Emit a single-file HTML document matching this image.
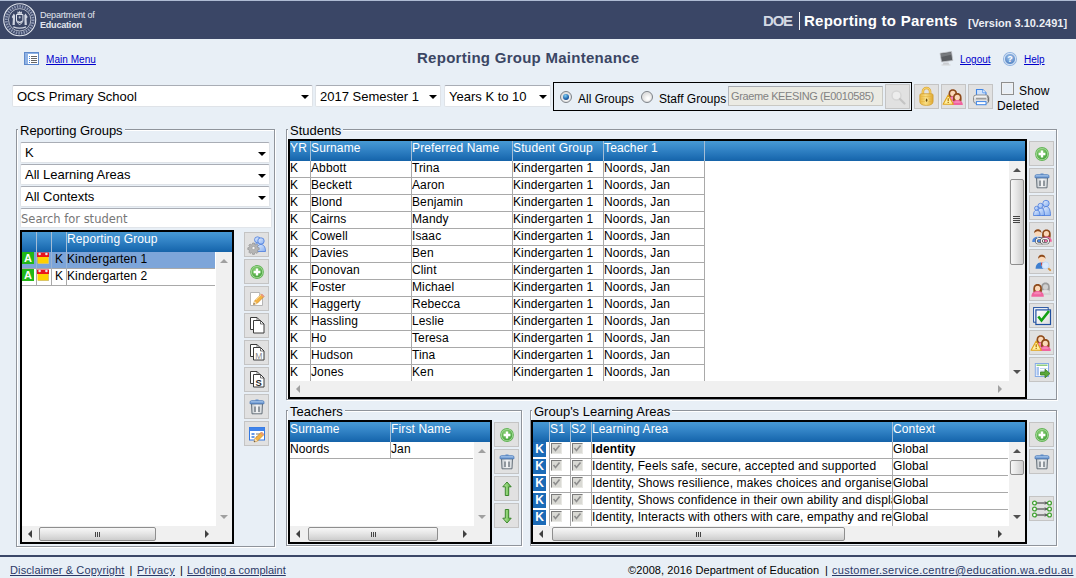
<!DOCTYPE html>
<html lang="en">
<head>
<meta charset="utf-8">
<title>Reporting Group Maintenance</title>
<style>
*{box-sizing:border-box;margin:0;padding:0}
html,body{width:1076px;height:578px;overflow:hidden}
body{background:#e8eff6;font-family:"Liberation Sans",Arial,sans-serif;font-size:13px;color:#000;position:relative}
.a{position:absolute}
a{color:#0000cc;text-decoration:underline}
#hdr{left:0;top:0;width:1076px;height:39px;background:#3a4666;border-top:1px solid #aebbd3;overflow:hidden}
.tb{font-weight:bold;white-space:nowrap}
.sel{background:#fff;border:1px solid #dfe3e8;border-top-color:#a9adb5;border-radius:2px;font-size:13px;white-space:nowrap;overflow:hidden;padding-left:4px}
.sel i{position:absolute;right:3px;top:50%;margin-top:-1px;border:4px solid transparent;border-top:4px solid #000;border-bottom:0;width:0;height:0}
.fs{border:1px solid #8f949b;box-shadow:inset 1px 1px 0 #fff,1px 1px 0 #fff}
.lg{background:#e8eff6;font-size:13px;line-height:15px;padding:0 2px 0 2px;white-space:nowrap}
.grid{border:2px solid #000;background:#fff;overflow:hidden}
.gh{left:0;top:0;right:0;height:20px;background:linear-gradient(#4799d4 0%,#3485c7 40%,#1c6cb2 85%,#1663a8 100%);color:#fff;font-size:12px;letter-spacing:.130px;white-space:nowrap}
.gh span{position:absolute;top:0;height:20px;border-left:1px solid #a4bdd6;padding-left:0;line-height:13px;padding-top:1px;overflow:hidden}
.gh span.f{border-left:0;padding-left:0}
.row{position:absolute;left:0;height:17px;font-size:12px;letter-spacing:.120px;white-space:nowrap}
.row span{position:absolute;top:0;height:17px;border-right:1px solid #a9a9a9;border-bottom:1px solid #a9a9a9;padding-left:0;overflow:hidden;line-height:14px;white-space:nowrap}
.btn{width:25px;height:25px;background:#e1e1e1;border:1px solid #c4c4c4}
.btn svg{position:absolute;left:4px;top:4px;width:16px;height:16px;overflow:visible}
.sb{background:#f0f0f0}
.thv{background:linear-gradient(90deg,#f7f7f7,#e6e6e6 45%,#cdcdcd);border:1px solid #8e8e8e;border-radius:2px}
.thh{background:linear-gradient(#f7f7f7,#e6e6e6 45%,#cdcdcd);border:1px solid #8e8e8e;border-radius:2px}
.au{border:4px solid transparent;border-bottom:4px solid #505050;border-top:0;width:0;height:0}
.ad{border:4px solid transparent;border-top:4px solid #505050;border-bottom:0;width:0;height:0}
.al{border:4px solid transparent;border-right:4px solid #404040;border-left:0;width:0;height:0}
.ar{border:4px solid transparent;border-left:4px solid #404040;border-right:0;width:0;height:0}
.gv i,.gv2 i{position:absolute;background:#444}
.ft{font-size:11px;line-height:13px;white-space:nowrap;color:#000}
a.ft{color:#2b3967}
.cb{width:11px;height:11px;background:#d9d9d4;border:1px solid #e8e8e4;border-top-color:#7a7a7a;border-left-color:#7a7a7a}
.kk{width:13px;height:15px;background:#1b6bb7;color:#fff;font-weight:bold;font-size:12px;line-height:15px;text-align:center;letter-spacing:0}
</style>
</head>
<body>
<div id="hdr" class="a">
<div class="a" style="left:600px;top:-1px;width:476px;height:40px;background:linear-gradient(90deg,rgba(255,255,255,0),rgba(255,255,255,.05) 40%%,rgba(255,255,255,.08))"></div>
<div class="a" style="left:620px;top:-70px;width:560px;height:180px;transform:rotate(-8deg);background:linear-gradient(180deg,rgba(255,255,255,0) 26%%,rgba(255,255,255,.09) 34%%,rgba(255,255,255,.02) 42%%,rgba(255,255,255,.10) 52%%,rgba(255,255,255,.01) 61%%,rgba(255,255,255,.07) 70%%,rgba(255,255,255,0) 80%%)"></div>
<svg class="a" style="left:2px;top:0px" width="36" height="37" viewBox="0 0 36 37">
<circle cx="17.700" cy="18.800" r="16" fill="none" stroke="#dfe3ec" stroke-width="1.100"/>
<circle cx="17.700" cy="18.800" r="13.400" fill="none" stroke="#8d97b3" stroke-width="2.800" stroke-dasharray="1.500 1.100"/>
<circle cx="17.700" cy="18.800" r="11.200" fill="none" stroke="#cfd4e0" stroke-width=".800"/>
<path d="M14.500 13.500h6.400v5.500c0 2.200-1.500 3.600-3.200 4.500c-1.700-.900-3.200-2.300-3.200-4.500z" fill="none" stroke="#dfe3ec" stroke-width="1"/>
<path d="M15.300 19.500c1.500 1.500 3.300 1.500 4.800 0v1.500c-1.500 1.300-3.300 1.300-4.800 0z" fill="#dfe3ec"/>
<path d="M15.200 12.800l.600-2.600l1 1.300l.900-1.700l.900 1.700l1-1.300l.600 2.600z" fill="#dfe3ec"/>
<path d="M11.800 12.500l1.300 1.800l-.300 9.700h-2.300l.400-6.500l-1.200-1.500zM23.600 12.500l-1.300 1.800l.300 9.700h2.300l-.400-6.500l1.200-1.500z" fill="#cfd4e0"/>
<path d="M11.300 25.800c4 1.600 8.800 1.600 12.800 0" stroke="#cfd4e0" stroke-width="1.300" fill="none"/>
<path d="M16.500 16.200h2.400M17.700 15v2.600" stroke="#cfd4e0" stroke-width=".700"/>
</svg>
<div class="a" id="dept" style="left:40px;top:9px;color:#e3e6ee;font-size:9px;line-height:10px;white-space:nowrap;letter-spacing:-.190px">Department of<br><b>Education</b></div>
<div class="a tb" id="doe" style="left:763px;top:11px;color:#d3d8e3;font-size:15px;line-height:18px;letter-spacing:-1.200px">DOE</div>
<div class="a" style="left:799px;top:11px;width:1px;height:18px;background:#f4f5f8"></div>
<div class="a tb" id="rtp" style="left:804px;top:11px;color:#fff;font-size:15px;line-height:18px;letter-spacing:.260px">Reporting to Parents</div>
<div class="a tb" id="ver" style="left:968px;top:15px;color:#eceef4;font-size:11px;line-height:14px">[Version 3.10.2491]</div>
</div>
<svg class="a" style="left:24px;top:52px" width="15" height="13" viewBox="0 0 15 13">
<rect x=".500" y=".500" width="14" height="12" fill="#8fb2e4" stroke="#5f8acb"/>
<rect x="4" y="2" width="10" height="10" fill="#fff"/>
<path d="M7 4.500h6M7 6.500h6M7 8.500h6M7 10.500h6" stroke="#555" stroke-width=".900"/>
<path d="M5 4.500h1M5 6.500h1M5 8.500h1M5 10.500h1" stroke="#3a7fdc" stroke-width=".900"/>
</svg>
<a class="a" id="mm" style="left:46px;top:53px;font-size:10px;line-height:13px;white-space:nowrap;letter-spacing:.050px">Main Menu</a>
<div class="a tb" id="title" style="left:417px;top:48.500px;font-size:15px;line-height:18px;color:#3b4664;letter-spacing:.270px">Reporting Group Maintenance</div>
<svg class="a" style="left:939px;top:51px" width="15" height="15" viewBox="0 0 15 15">
<path d="M4.500 11.500h5l.800 2.500h-6.600z" fill="#c9ccd0"/><path d="M2.500 14h9" stroke="#d5d8dc" stroke-width="1.200"/>
<path d="M1 2.200l11.500-1.700l1.300 9l-11.300 1.500z" fill="#5a5d61" stroke="#c4c7cb" stroke-width=".800"/><path d="M1.800 2.900l10.200-1.500l.300 2.300l-10.200 2.200z" fill="#8a8d91" opacity=".6"/>
</svg>
<div class="a" style="left:1004px;top:53px;width:12px;height:12px;border-radius:50%;background:radial-gradient(circle at 50% 35%,#a9c9ee,#5585c4 75%);border:1px solid #cfe0f5;box-shadow:0 0 0 1px #8fb2e0;color:#fff;font-weight:bold;font-size:9px;line-height:10px;text-align:center">?</div>
<a class="a" id="lo" style="left:960px;top:53px;font-size:10px;line-height:13px;white-space:nowrap">Logout</a>
<a class="a" id="hp" style="left:1024px;top:53px;font-size:10px;line-height:13px;white-space:nowrap">Help</a>

<div class="a sel" style="left:12px;top:85px;width:301px;height:22px;line-height:22px">OCS Primary School<i></i></div>
<div class="a sel" style="left:315px;top:85px;width:126px;height:22px;line-height:22px">2017 Semester 1<i></i></div>
<div class="a sel" style="left:444px;top:85px;width:107px;height:22px;line-height:22px">Years K to 10<i></i></div>
<div class="a" style="left:553px;top:82px;width:359px;height:29px;border:1px solid #000"></div>
<div class="a" style="left:560px;top:91px;width:12px;height:12px;border-radius:50%;border:1px solid #7d8288;background:radial-gradient(circle at 60% 65%,#ffffff 10%,#c9c9c9 100%);box-shadow:inset 0 0 0 1px #e4e4e4"><div class="a" style="left:2px;top:2px;width:6px;height:6px;border-radius:50%;background:radial-gradient(circle at 40% 30%,#7fd0f5,#1d5fa8 60%,#123c78)"></div></div>
<div class="a" id="ag" style="left:578px;top:92px;font-size:12px;line-height:15px;white-space:nowrap">All Groups</div>
<div class="a" style="left:641px;top:91px;width:12px;height:12px;border-radius:50%;border:1px solid #7d8288;background:radial-gradient(circle at 60% 65%,#ffffff 10%,#c9c9c9 100%);box-shadow:inset 0 0 0 1px #e4e4e4"></div>
<div class="a" id="sg" style="left:659px;top:92px;font-size:12px;line-height:15px;white-space:nowrap">Staff Groups</div>
<div class="a" id="gk" style="left:728px;top:86px;width:155px;height:20px;background:#ebebe4;border:1px solid #c9c9c4;border-top-color:#a5a9b0;border-left-color:#b5b8be;font-size:11px;letter-spacing:-.380px;line-height:19px;color:#828282;padding-left:2px;white-space:nowrap;overflow:hidden"><span id="gkt">Graeme KEESING (E0010585)</span></div>
<div class="a btn" style="left:885px;top:84px"><svg viewBox="0 0 16 16"><circle cx="6.500" cy="6.500" r="4.500" fill="#ededed" stroke="#d6d6d6" stroke-width="1.500"/><path d="M10 10l4.500 4.500" stroke="#c4c4c4" stroke-width="2.200" stroke-linecap="round"/></svg></div>
<div class="a btn" style="left:914px;top:84px"><svg viewBox="0 0 16 16"><defs><linearGradient id="glk" x1="0" x2="1"><stop offset="0" stop-color="#e9b740"/><stop offset=".45" stop-color="#f8de84"/><stop offset="1" stop-color="#dfa82f"/></linearGradient></defs><path d="M3.900 6.500V2.600a3.600 3.600 0 0 1 7.200 0V6.500" fill="none" stroke="#dfa935" stroke-width="2.500"/><path d="M3.900 6.500V2.600a3.600 3.600 0 0 1 7.200 0V6.500" fill="none" stroke="#f6d774" stroke-width="1.100"/><path d="M.800 6.200q0-1.500 1.500-1.500h10.300q1.500 0 1.500 1.500v6.200q0 4-6.650 4t-6.650-4z" fill="url(#glk)" stroke="#cf9a2c" stroke-width=".700"/><path d="M1.500 7.500h12M1.500 10h12M1.500 12.500h12" stroke="#e2ae3c" stroke-width=".500"/><ellipse cx="7.600" cy="11" rx="2" ry="2.600" fill="#f9e089"/><ellipse cx="7.600" cy="11.200" rx=".800" ry="1.600" fill="#6b4c10"/></svg></div>
<div class="a btn" style="left:941px;top:84px"><svg viewBox="0 0 16 16"><path d="M2.7 8.5c-.900-6.500 1-8.300 4.100-8.300s5 1.800 4.100 8.300z" fill="#8e4a1a"/><ellipse cx="6.8" cy="4.5" rx="2.600" ry="2.700" fill="#fbd8b8"/><path d="M2.3 12.2C2.3 8.7 4.324999999999999 7.199999999999999 6.8 7.199999999999999C9.275 7.199999999999999 11.3 8.7 11.3 12.2z" fill="#f0639f"/><path d="M4.1 10.149999999999999C4.1 8.575 5.3149999999999995 7.8999999999999995 6.8 7.8999999999999995C8.285 7.8999999999999995 9.5 8.575 9.5 10.149999999999999z" fill="#f9a3c8" opacity=".55"/><path d="M7.200000000000001 12.4c-.900-6.500 1-8.300 4.100-8.300s5 1.800 4.100 8.300z" fill="#8e4a1a"/><ellipse cx="11.3" cy="8.4" rx="2.600" ry="2.700" fill="#fbd8b8"/><path d="M5.800000000000001 16.1C5.800000000000001 12.6 8.275 11.1 11.3 11.1C14.325000000000001 11.1 16.8 12.6 16.8 16.1z" fill="#f0639f"/><path d="M8.0 14.05C8.0 12.475000000000001 9.485000000000001 11.8 11.3 11.8C13.115 11.8 14.600000000000001 12.475000000000001 14.600000000000001 14.05z" fill="#f9a3c8" opacity=".55"/><path d="M2.200 6l5.100 9.200h-10.200z" fill="#fff0a0" stroke="#e0a21a" stroke-width="1.100" stroke-linejoin="round"/><path d="M2.200 9.300v2.900M2.200 13v1" stroke="#b06d00" stroke-width="1.200"/></svg></div>
<div class="a btn" style="left:968px;top:84px"><svg viewBox="0 0 16 16"><defs><linearGradient id="gpr" y1="0" y2="1" x2="0"><stop offset="0" stop-color="#fdfdfd"/><stop offset=".55" stop-color="#d9d9d9"/><stop offset="1" stop-color="#f4f4f4"/></linearGradient></defs><path d="M3.500 7V.500h6.200l3.300 3.300V7z" fill="#cfe2fb" stroke="#3f85e6" stroke-width="1.100"/><path d="M9.700 .500v3.300h3.300" fill="#eef5fe" stroke="#3f85e6" stroke-width=".700"/><rect x=".500" y="6" width="15.300" height="8.300" rx="2.600" fill="url(#gpr)" stroke="#858585" stroke-width=".900"/><path d="M3 9.600h10.300" stroke="#9c9c9c" stroke-width="1.600"/><path d="M13.800 7.500q1.400 0 1.400 1.500v3.500" fill="none" stroke="#555" stroke-width=".900"/><rect x="3.400" y="12.600" width="9.600" height="3.100" fill="#fff" stroke="#3f85e6" stroke-width="1"/></svg></div>
<div class="a" style="left:1001px;top:82px;width:13px;height:13px;background:linear-gradient(135deg,#d3d7dc,#f8f8f8 70%%);border:1px solid #8e8f8f;box-shadow:inset 0 0 0 1px #f1f1f1"></div>
<div class="a" id="sh" style="left:1019px;top:84px;font-size:12px;line-height:15px;letter-spacing:.150px">Show</div>
<div class="a" id="dl" style="left:997px;top:99px;font-size:12px;line-height:15px;letter-spacing:.150px">Deleted</div>
<div class="a fs" style="left:16px;top:129px;width:259px;height:418px"></div>
<div class="a lg" style="left:18px;top:123px">Reporting Groups</div>
<div class="a sel" style="left:20px;top:142px;width:250px;height:21px;line-height:19px">K<i></i></div>
<div class="a sel" style="left:20px;top:164px;width:250px;height:21px;line-height:19px">All Learning Areas<i></i></div>
<div class="a sel" style="left:20px;top:186px;width:250px;height:21px;line-height:19px">All Contexts<i></i></div>
<div class="a" id="sfs" style="left:20px;top:208px;width:252px;height:20px;background:#fff;border:1px solid #e1e5ea;border-top-color:#a9adb5;border-radius:2px;font-family:'DejaVu Sans','Liberation Sans',sans-serif;font-size:11.500px;line-height:20px;color:#777;white-space:nowrap;overflow:hidden"><span id="sfst">Search for student</span></div>
<div class="a grid" style="left:20px;top:230px;width:214px;height:314px">
<div class="a gh"><span class="f" style="left:0;width:14px"></span><span style="left:14px;width:15px"></span><span style="left:29px;width:15px"></span><span style="left:44px;right:0">Reporting Group</span></div>
<div class="row" style="top:20px;width:193px;background:#7da5d9;">
<span style="left:0;width:15px;padding:0;border-right-color:#9ab4d4;"><b class="a" style="left:0;top:0;width:12px;height:12px;letter-spacing:0;background:#22b716;color:#fff;font-size:11px;line-height:12px;text-align:center">A</b></span>
<span style="left:15px;width:15px;padding:0;border-right-color:#9ab4d4;"><svg class="a" style="left:0;top:0" width="13" height="13" viewBox="0 0 13 13"><rect x="1" y="4.500" width="11" height="7.500" fill="#b9bcc6"/><rect x=".500" y="4.500" width="11" height="7" fill="#ffd000"/><rect x="0" y=".500" width="12" height="4.500" fill="#e9131c"/><circle cx="2.600" cy="2" r="1.300" fill="#e4e4ea"/><circle cx="9.400" cy="2" r="1.300" fill="#e4e4ea"/></svg></span>
<span style="left:30px;width:15px;text-align:right;padding-right:3px;border-right-color:#9ab4d4;">K</span>
<span style="left:45px;width:148px;border-right:0">Kindergarten 1</span>
</div>
<div class="row" style="top:37px;width:193px;">
<span style="left:0;width:15px;padding:0;"><b class="a" style="left:0;top:0;width:12px;height:12px;letter-spacing:0;background:#22b716;color:#fff;font-size:11px;line-height:12px;text-align:center">A</b></span>
<span style="left:15px;width:15px;padding:0;"><svg class="a" style="left:0;top:0" width="13" height="13" viewBox="0 0 13 13"><rect x="1" y="4.500" width="11" height="7.500" fill="#b9bcc6"/><rect x=".500" y="4.500" width="11" height="7" fill="#ffd000"/><rect x="0" y=".500" width="12" height="4.500" fill="#e9131c"/><circle cx="2.600" cy="2" r="1.300" fill="#e4e4ea"/><circle cx="9.400" cy="2" r="1.300" fill="#e4e4ea"/></svg></span>
<span style="left:30px;width:15px;text-align:right;padding-right:3px;">K</span>
<span style="left:45px;width:148px;border-right:0">Kindergarten 2</span>
</div>
</div>
<div class="a sb" style="left:216px;top:252px;width:16px;height:274px">
<div class="a au" style="left:4px;top:7px;opacity:.5"></div><div class="a ad" style="left:4px;bottom:7px;opacity:.5"></div>
</div>
<div class="a sb" style="left:22px;top:526px;width:194px;height:16px">
<div class="a al" style="left:6px;top:4px"></div><div class="a ar" style="right:7px;top:4px"></div>
<div class="a thh" style="left:17px;top:1px;width:117px;height:14px">
<div class="gv2"><i style="top:4px;left:55px;width:1px;height:5px"></i><i style="top:4px;left:57px;width:1px;height:5px"></i><i style="top:4px;left:59px;width:1px;height:5px"></i></div>
</div>
</div>
<div class="a sb" style="left:216px;top:526px;width:16px;height:16px"></div>
<div class="a btn" style="left:244px;top:232px"><svg viewBox="0 0 16 16"><defs><linearGradient id="gbp" x1="0" y1="0" x2="1" y2="1"><stop offset="0" stop-color="#e6effd"/><stop offset="1" stop-color="#86aef0"/></linearGradient></defs><path d="M4.5 12.5C4.5 7.95 6.4125 6 8.75 6C11.0875 6 13.0 7.95 13.0 12.5z" fill="url(#gbp)" stroke="#4a7bdc" stroke-width=".800"/><circle cx="8.5" cy="2.8" r="3" fill="url(#gbp)" stroke="#4a7bdc" stroke-width=".800"/><path d="M7.5 14.5C7.5 9.6 9.525 7.5 12.0 7.5C14.475 7.5 16.5 9.6 16.5 14.5z" fill="url(#gbp)" stroke="#4a7bdc" stroke-width=".800"/><circle cx="12" cy="4" r="3.2" fill="url(#gbp)" stroke="#4a7bdc" stroke-width=".800"/><g transform="translate(4.500 11)"><path d="M-.900-5h1.800l.300 1.400l1 .400l1.200-.800l1.300 1.300l-.800 1.200l.400 1l1.400.300v1.800l-1.400.300l-.400 1l.800 1.200l-1.300 1.300l-1.200-.800l-1 .400l-.300 1.400h-1.800l-.300-1.400l-1-.400l-1.200.800l-1.300-1.300l.800-1.200l-.400-1l-1.400-.300v-1.800l1.400-.300l.400-1l-.800-1.200l1.300-1.300l1.200.800l1-.400z" fill="#b5b5b5" stroke="#8c8c8c" stroke-width=".600"/><circle cx="0" cy="0" r="1.600" fill="#f4f4f4" stroke="#8c8c8c" stroke-width=".500"/></g></svg></div>
<div class="a btn" style="left:244px;top:259px"><svg viewBox="0 0 16 16"><defs><radialGradient id="gadd" cx=".4" cy=".3" r=".8"><stop offset="0" stop-color="#8fd27a"/><stop offset="1" stop-color="#3f9f36"/></radialGradient></defs><circle cx="8" cy="8" r="6.900" fill="#62b455"/><circle cx="8" cy="8" r="6.100" fill="#a9dc9c"/><circle cx="8" cy="8" r="5.300" fill="url(#gadd)"/><path d="M8 4.600v6.800M4.600 8h6.800" stroke="#fff" stroke-width="2.300"/></svg></div>
<div class="a btn" style="left:244px;top:286px"><svg viewBox="0 0 16 16"><path d="M1.500 1.500h9l3 3v10h-12z" fill="#fff" stroke="#b5b5b5" stroke-width="1"/><path d="M10.500 1.500v3h3" fill="#eee" stroke="#b5b5b5" stroke-width=".800"/><path d="M4.500 13.500l1-3.500l7-7l2.500 2.500l-7 7z" fill="#f3b244" stroke="#c98820" stroke-width=".700"/><path d="M4.500 13.500l1-3.500l2.500 2.500z" fill="#f8e2bd"/><path d="M4.500 13.500l.450-1.500l1.050 1.050z" fill="#333"/><path d="M12.300 3.200l2.500 2.500" stroke="#e8928a" stroke-width="1.500"/><path d="M7 9l5-5" stroke="#fbd98a" stroke-width=".900"/></svg></div>
<div class="a btn" style="left:244px;top:313px"><svg viewBox="0 0 16 16"><path d="M1.500 -.500h6.500l3 3v9h-9.500z" fill="#fff" stroke="#3a3a3a" stroke-width="1"/><path d="M8 -.500v3h3" fill="none" stroke="#3a3a3a" stroke-width=".700"/><path d="M4.500 2.500h7l3.500 3.500v9h-10.500z" fill="#fff" stroke="#3a3a3a" stroke-width="1"/><path d="M11.500 2.500v3.500h3.500" fill="none" stroke="#3a3a3a" stroke-width=".700"/></svg></div>
<div class="a btn" style="left:244px;top:340px"><svg viewBox="0 0 16 16"><path d="M1.500 -.500h6.500l3 3v9h-9.500z" fill="#fff" stroke="#3a3a3a" stroke-width="1"/><path d="M8 -.500v3h3" fill="none" stroke="#3a3a3a" stroke-width=".700"/><path d="M4.500 2.500h7l3.500 3.500v9h-10.500z" fill="#fff" stroke="#3a3a3a" stroke-width="1"/><path d="M11.500 2.500v3.500h3.500" fill="none" stroke="#3a3a3a" stroke-width=".700"/><text x="9.700" y="14" font-family="Liberation Sans,sans-serif" font-size="8.500" text-anchor="middle" fill="#8a8a8a">M</text></svg></div>
<div class="a btn" style="left:244px;top:367px"><svg viewBox="0 0 16 16"><path d="M1.500 -.500h6.500l3 3v9h-9.500z" fill="#fff" stroke="#3a3a3a" stroke-width="1"/><path d="M8 -.500v3h3" fill="none" stroke="#3a3a3a" stroke-width=".700"/><path d="M4.500 2.500h7l3.500 3.500v9h-10.500z" fill="#fff" stroke="#3a3a3a" stroke-width="1"/><path d="M11.500 2.500v3.500h3.500" fill="none" stroke="#3a3a3a" stroke-width=".700"/><text x="9.700" y="14.300" font-family="Liberation Sans,sans-serif" font-size="9.500" font-weight="bold" text-anchor="middle" fill="#2a2a2a">S</text></svg></div>
<div class="a btn" style="left:244px;top:394px"><svg viewBox="0 0 16 16"><defs><linearGradient id="gtb" x1="0" x2="1"><stop offset="0" stop-color="#c3c9ce"/><stop offset=".5" stop-color="#f4f5f6"/><stop offset="1" stop-color="#cfd4d8"/></linearGradient><linearGradient id="gtl" y1="0" y2="1" x2="0"><stop offset="0" stop-color="#b5d0f0"/><stop offset="1" stop-color="#5b8ccc"/></linearGradient></defs><path d="M2.500 4.800h11l-.500 10h-10z" fill="url(#gtb)" stroke="#5c6872" stroke-width=".900"/><path d="M6 7.500v5.500M10 7.500v5.500" stroke="#6d767e" stroke-width="1.400"/><rect x="6.500" y=".500" width="3" height="1.500" fill="#5b8ccc"/><path d="M1 4.800v-1.600q0-1.600 1.600-1.600h10.800q1.600 0 1.600 1.600v1.600z" fill="url(#gtl)" stroke="#4675b5" stroke-width=".700"/></svg></div>
<div class="a btn" style="left:244px;top:421px"><svg viewBox="0 0 16 16"><rect x=".500" y="1.500" width="15" height="12.500" fill="#fff" stroke="#3478e0" stroke-width="1"/><rect x=".500" y="1.500" width="15" height="3.500" fill="#3f83ea"/><path d="M2.500 8h3M2.500 11h3" stroke="#3478e0" stroke-width="1.400"/><path d="M7 8h6M7 11h3" stroke="#a5a5a5" stroke-width="1.300"/><path d="M5 16l1-3.500l6.500-6.500l2.500 2.500l-6.500 6.500z" fill="#f3b244" stroke="#c98820" stroke-width=".700"/><path d="M5 16l1-3.500l2.500 2.500z" fill="#f8e2bd"/><path d="M5 16l.450-1.500l1.050 1.050z" fill="#333"/><path d="M12 6.500l2.500 2.500" stroke="#e8928a" stroke-width="1.400"/></svg></div>
<div class="a fs" style="left:286px;top:129px;width:771px;height:271px"></div>
<div class="a lg" style="left:288px;top:123px">Students</div>
<div class="a grid" style="left:288px;top:139px;width:739px;height:260px">
<div class="a gh">
<span class="f" style="left:0px;width:20px">YR</span>
<span style="left:20px;width:101px">Surname</span>
<span style="left:121px;width:101px">Preferred Name</span>
<span style="left:222px;width:91px">Student Group</span>
<span style="left:313px;width:101px">Teacher 1</span>
<span style="left:414px;right:0"></span></div>
<div class="row" style="top:20px;width:415px">
<span style="left:0px;width:21px">K</span>
<span style="left:21px;width:101px">Abbott</span>
<span style="left:122px;width:101px">Trina</span>
<span style="left:223px;width:91px">Kindergarten 1</span>
<span style="left:314px;width:101px">Noords, Jan</span>
</div>
<div class="row" style="top:37px;width:415px">
<span style="left:0px;width:21px">K</span>
<span style="left:21px;width:101px">Beckett</span>
<span style="left:122px;width:101px">Aaron</span>
<span style="left:223px;width:91px">Kindergarten 1</span>
<span style="left:314px;width:101px">Noords, Jan</span>
</div>
<div class="row" style="top:54px;width:415px">
<span style="left:0px;width:21px">K</span>
<span style="left:21px;width:101px">Blond</span>
<span style="left:122px;width:101px">Benjamin</span>
<span style="left:223px;width:91px">Kindergarten 1</span>
<span style="left:314px;width:101px">Noords, Jan</span>
</div>
<div class="row" style="top:71px;width:415px">
<span style="left:0px;width:21px">K</span>
<span style="left:21px;width:101px">Cairns</span>
<span style="left:122px;width:101px">Mandy</span>
<span style="left:223px;width:91px">Kindergarten 1</span>
<span style="left:314px;width:101px">Noords, Jan</span>
</div>
<div class="row" style="top:88px;width:415px">
<span style="left:0px;width:21px">K</span>
<span style="left:21px;width:101px">Cowell</span>
<span style="left:122px;width:101px">Isaac</span>
<span style="left:223px;width:91px">Kindergarten 1</span>
<span style="left:314px;width:101px">Noords, Jan</span>
</div>
<div class="row" style="top:105px;width:415px">
<span style="left:0px;width:21px">K</span>
<span style="left:21px;width:101px">Davies</span>
<span style="left:122px;width:101px">Ben</span>
<span style="left:223px;width:91px">Kindergarten 1</span>
<span style="left:314px;width:101px">Noords, Jan</span>
</div>
<div class="row" style="top:122px;width:415px">
<span style="left:0px;width:21px">K</span>
<span style="left:21px;width:101px">Donovan</span>
<span style="left:122px;width:101px">Clint</span>
<span style="left:223px;width:91px">Kindergarten 1</span>
<span style="left:314px;width:101px">Noords, Jan</span>
</div>
<div class="row" style="top:139px;width:415px">
<span style="left:0px;width:21px">K</span>
<span style="left:21px;width:101px">Foster</span>
<span style="left:122px;width:101px">Michael</span>
<span style="left:223px;width:91px">Kindergarten 1</span>
<span style="left:314px;width:101px">Noords, Jan</span>
</div>
<div class="row" style="top:156px;width:415px">
<span style="left:0px;width:21px">K</span>
<span style="left:21px;width:101px">Haggerty</span>
<span style="left:122px;width:101px">Rebecca</span>
<span style="left:223px;width:91px">Kindergarten 1</span>
<span style="left:314px;width:101px">Noords, Jan</span>
</div>
<div class="row" style="top:173px;width:415px">
<span style="left:0px;width:21px">K</span>
<span style="left:21px;width:101px">Hassling</span>
<span style="left:122px;width:101px">Leslie</span>
<span style="left:223px;width:91px">Kindergarten 1</span>
<span style="left:314px;width:101px">Noords, Jan</span>
</div>
<div class="row" style="top:190px;width:415px">
<span style="left:0px;width:21px">K</span>
<span style="left:21px;width:101px">Ho</span>
<span style="left:122px;width:101px">Teresa</span>
<span style="left:223px;width:91px">Kindergarten 1</span>
<span style="left:314px;width:101px">Noords, Jan</span>
</div>
<div class="row" style="top:207px;width:415px">
<span style="left:0px;width:21px">K</span>
<span style="left:21px;width:101px">Hudson</span>
<span style="left:122px;width:101px">Tina</span>
<span style="left:223px;width:91px">Kindergarten 1</span>
<span style="left:314px;width:101px">Noords, Jan</span>
</div>
<div class="row" style="top:224px;width:415px">
<span style="left:0px;width:21px">K</span>
<span style="left:21px;width:101px">Jones</span>
<span style="left:122px;width:101px">Ken</span>
<span style="left:223px;width:91px">Kindergarten 1</span>
<span style="left:314px;width:101px">Noords, Jan</span>
</div>
</div>
<div class="a sb" style="left:1009px;top:161px;width:16px;height:220px">
<div class="a au" style="left:4px;top:7px"></div><div class="a ad" style="left:4px;bottom:7px"></div>
<div class="a thv" style="left:1px;top:18px;width:14px;height:86px">
<div class="gv"><i style="left:2px;top:36px;width:7px;height:1px"></i><i style="left:2px;top:38px;width:7px;height:1px"></i><i style="left:2px;top:40px;width:7px;height:1px"></i><i style="left:2px;top:42px;width:7px;height:1px"></i></div>
</div>
</div>
<div class="a sb" style="left:290px;top:381px;width:719px;height:16px">
<div class="a al" style="left:6px;top:4px;opacity:.45"></div><div class="a ar" style="right:7px;top:4px;opacity:.45"></div>
</div>
<div class="a sb" style="left:1009px;top:381px;width:16px;height:16px"></div>
<div class="a btn" style="left:1029px;top:141px"><svg viewBox="0 0 16 16"><defs><radialGradient id="gadd" cx=".4" cy=".3" r=".8"><stop offset="0" stop-color="#8fd27a"/><stop offset="1" stop-color="#3f9f36"/></radialGradient></defs><circle cx="8" cy="8" r="6.900" fill="#62b455"/><circle cx="8" cy="8" r="6.100" fill="#a9dc9c"/><circle cx="8" cy="8" r="5.300" fill="url(#gadd)"/><path d="M8 4.600v6.800M4.600 8h6.800" stroke="#fff" stroke-width="2.300"/></svg></div>
<div class="a btn" style="left:1029px;top:168px"><svg viewBox="0 0 16 16"><defs><linearGradient id="gtb" x1="0" x2="1"><stop offset="0" stop-color="#c3c9ce"/><stop offset=".5" stop-color="#f4f5f6"/><stop offset="1" stop-color="#cfd4d8"/></linearGradient><linearGradient id="gtl" y1="0" y2="1" x2="0"><stop offset="0" stop-color="#b5d0f0"/><stop offset="1" stop-color="#5b8ccc"/></linearGradient></defs><path d="M2.500 4.800h11l-.500 10h-10z" fill="url(#gtb)" stroke="#5c6872" stroke-width=".900"/><path d="M6 7.500v5.500M10 7.500v5.500" stroke="#6d767e" stroke-width="1.400"/><rect x="6.500" y=".500" width="3" height="1.500" fill="#5b8ccc"/><path d="M1 4.800v-1.600q0-1.600 1.600-1.600h10.800q1.600 0 1.600 1.600v1.600z" fill="url(#gtl)" stroke="#4675b5" stroke-width=".700"/></svg></div>
<div class="a btn" style="left:1029px;top:195px"><svg viewBox="0 0 16 16"><defs><linearGradient id="gbp" x1="0" y1="0" x2="1" y2="1"><stop offset="0" stop-color="#e6effd"/><stop offset="1" stop-color="#86aef0"/></linearGradient></defs><path d="M8.0 15.5C8.0 9.2 9.9125 6.5 12.25 6.5C14.5875 6.5 16.5 9.2 16.5 15.5z" fill="url(#gbp)" stroke="#4a7bdc" stroke-width=".800"/><circle cx="12" cy="3.5" r="3.2" fill="url(#gbp)" stroke="#4a7bdc" stroke-width=".800"/><path d="M3.5 15.5C3.5 10.25 5.074999999999999 8 7.0 8C8.925 8 10.5 10.25 10.5 15.5z" fill="url(#gbp)" stroke="#4a7bdc" stroke-width=".800"/><circle cx="6.5" cy="5.8" r="2.5" fill="url(#gbp)" stroke="#4a7bdc" stroke-width=".800"/><path d="M-0.5 15.5C-0.5 11.65 0.9624999999999999 10 2.75 10C4.5375 10 6.0 11.65 6.0 15.5z" fill="url(#gbp)" stroke="#4a7bdc" stroke-width=".800"/><circle cx="2.5" cy="8.3" r="2" fill="url(#gbp)" stroke="#4a7bdc" stroke-width=".800"/></svg></div>
<div class="a btn" style="left:1029px;top:222px"><svg viewBox="0 0 16 16"><circle cx="3.8" cy="6.1" r="3.300" fill="#fbd8b8"/><path d="M0.19999999999999973 6.2c-.800-5.400 8-5.400 7.200 0c-1.200-2.200-4.700-2.800-7.200 0z" fill="#8e4a1a"/><path d="M-1.7999999999999998 14.899999999999999C-1.7999999999999998 11.26 0.7199999999999998 9.7 3.8 9.7C6.88 9.7 9.399999999999999 11.26 9.399999999999999 14.899999999999999z" fill="#4f86d9"/><path d="M2.5 9.7l1.300 1.600l1.300-1.600z" fill="#fff"/><path d="M8.3 10.8c-.900-6.500 1-8.300 4.100-8.300s5 1.800 4.100 8.300z" fill="#8e4a1a"/><ellipse cx="12.4" cy="6.8" rx="2.600" ry="2.700" fill="#fbd8b8"/><path d="M7.0 14.7C7.0 11.06 9.43 9.5 12.4 9.5C15.370000000000001 9.5 17.8 11.06 17.8 14.7z" fill="#f0639f"/><path d="M9.16 12.54C9.16 10.902 10.618 10.2 12.4 10.2C14.182 10.2 15.64 10.902 15.64 12.54z" fill="#f9a3c8" opacity=".55"/><rect x="2.300" y="11.600" width="7.200" height="4.600" rx="2.300" fill="none" stroke="#4a4a4a" stroke-width="2.300"/><rect x="2.300" y="11.600" width="7.200" height="4.600" rx="2.300" fill="none" stroke="#f6f6f6" stroke-width="1.100"/><rect x="7.300" y="11.600" width="7.200" height="4.600" rx="2.300" fill="none" stroke="#4a4a4a" stroke-width="2.300"/><rect x="7.300" y="11.600" width="7.200" height="4.600" rx="2.300" fill="none" stroke="#f6f6f6" stroke-width="1.100"/></svg></div>
<div class="a btn" style="left:1029px;top:249px"><svg viewBox="0 0 16 16"><circle cx="7.8" cy="4.6" r="3.300" fill="#fbd8b8"/><path d="M4.199999999999999 4.7c-.800-5.400 8-5.400 7.200 0c-1.200-2.200-4.700-2.800-7.200 0z" fill="#8e4a1a"/><path d="M1.5999999999999996 14.799999999999999C1.5999999999999996 10.18 4.389999999999999 8.2 7.8 8.2C11.21 8.2 14.0 10.18 14.0 14.799999999999999z" fill="#3f7fcf"/><path d="M6.5 8.2l1.300 1.600l1.300-1.600z" fill="#fff"/><path d="M7.800 8.400v3.600" stroke="#d0312b" stroke-width="1.300"/><path d="M13.800 13.800l2.400 2.400" stroke="#d2903f" stroke-width="1.900" stroke-linecap="round"/><circle cx="11.500" cy="11.400" r="3.500" fill="#dbe9fb" stroke="#c3d8f4" stroke-width=".900"/></svg></div>
<div class="a btn" style="left:1029px;top:276px"><svg viewBox="0 0 16 16"><path d="M7.4 9.9c-.900-6.500 1-8.300 4.100-8.300s5 1.800 4.100 8.300z" fill="#9c9c9c"/><ellipse cx="11.5" cy="5.9" rx="2.600" ry="2.700" fill="#cfcfcf"/><path d="M5.9 14.1C5.9 10.25 8.42 8.6 11.5 8.6C14.58 8.6 17.1 10.25 17.1 14.1z" fill="#d4d4d4"/><path d="M8.14 11.775C8.14 10.0425 9.652 9.3 11.5 9.3C13.348 9.3 14.86 10.0425 14.86 11.775z" fill="#f0f0f0" opacity=".55"/><path d="M-0.49999999999999956 11.4c-.900-6.500 1-8.300 4.100-8.300s5 1.800 4.100 8.300z" fill="#8e4a1a"/><ellipse cx="3.6" cy="7.4" rx="2.600" ry="2.700" fill="#fbd8b8"/><path d="M-2.6 15.7C-2.6 11.78 0.1899999999999995 10.1 3.6 10.1C7.010000000000001 10.1 9.8 11.78 9.8 15.7z" fill="#f0639f"/><path d="M-0.11999999999999966 13.32C-0.11999999999999966 11.556000000000001 1.5540000000000003 10.8 3.6 10.8C5.646 10.8 7.32 11.556000000000001 7.32 13.32z" fill="#f9a3c8" opacity=".55"/></svg></div>
<div class="a btn" style="left:1029px;top:303px"><svg viewBox="0 0 16 16"><defs><linearGradient id="gck" x1="0" y1="0" x2="1" y2="1"><stop offset="0" stop-color="#fff"/><stop offset="1" stop-color="#dcdcdc"/></linearGradient></defs><rect x="-.400" y="-.400" width="14.600" height="14.600" fill="#fff" stroke="#1f4f9f" stroke-width="1"/><rect x="1.900" y="1.900" width="14.600" height="14.600" fill="url(#gck)" stroke="#1f4f9f" stroke-width="1.200"/><path d="M4.300 8.500l3.200 4l7.500-9.500" fill="none" stroke="#12a012" stroke-width="2.600"/></svg></div>
<div class="a btn" style="left:1029px;top:330px"><svg viewBox="0 0 16 16"><path d="M2.7 8.5c-.900-6.500 1-8.300 4.100-8.300s5 1.800 4.100 8.300z" fill="#8e4a1a"/><ellipse cx="6.8" cy="4.5" rx="2.600" ry="2.700" fill="#fbd8b8"/><path d="M2.3 12.2C2.3 8.7 4.324999999999999 7.199999999999999 6.8 7.199999999999999C9.275 7.199999999999999 11.3 8.7 11.3 12.2z" fill="#f0639f"/><path d="M4.1 10.149999999999999C4.1 8.575 5.3149999999999995 7.8999999999999995 6.8 7.8999999999999995C8.285 7.8999999999999995 9.5 8.575 9.5 10.149999999999999z" fill="#f9a3c8" opacity=".55"/><path d="M7.200000000000001 12.4c-.900-6.500 1-8.300 4.100-8.300s5 1.800 4.100 8.300z" fill="#8e4a1a"/><ellipse cx="11.3" cy="8.4" rx="2.600" ry="2.700" fill="#fbd8b8"/><path d="M5.800000000000001 16.1C5.800000000000001 12.6 8.275 11.1 11.3 11.1C14.325000000000001 11.1 16.8 12.6 16.8 16.1z" fill="#f0639f"/><path d="M8.0 14.05C8.0 12.475000000000001 9.485000000000001 11.8 11.3 11.8C13.115 11.8 14.600000000000001 12.475000000000001 14.600000000000001 14.05z" fill="#f9a3c8" opacity=".55"/><path d="M2.200 6l5.100 9.200h-10.200z" fill="#fff0a0" stroke="#e0a21a" stroke-width="1.100" stroke-linejoin="round"/><path d="M2.200 9.300v2.900M2.200 13v1" stroke="#b06d00" stroke-width="1.200"/></svg></div>
<div class="a btn" style="left:1029px;top:357px"><svg viewBox="0 0 16 16"><rect x="1.300" y="1.500" width="13.200" height="13" fill="#fff" stroke="#86abe6" stroke-width="1"/><path d="M2.500 3.200h11" stroke="#7cc36a" stroke-width="1.300"/><rect x="2.500" y="5" width="2.500" height="8.500" fill="#a9c4ee"/><path d="M6 6.500h7.500M6 9h7.500M6 11.500h7.500" stroke="#c5d6f0" stroke-width="1"/><path d="M6.500 10h4.500v-2.800l5 4.300l-5 4.300v-2.800h-4.500z" fill="#5aa83a" stroke="#3b7d23" stroke-width=".800" stroke-linejoin="round"/></svg></div>
<div class="a fs" style="left:286px;top:410px;width:236px;height:136px"></div>
<div class="a lg" style="left:288px;top:404px">Teachers</div>
<div class="a grid" style="left:288px;top:420px;width:204px;height:124px">
<div class="a gh"><span class="f" style="left:0;width:100px">Surname</span><span style="left:100px;right:0">First Name</span></div>
<div class="row" style="top:20px;width:183px"><span style="left:0;width:101px">Noords</span><span style="left:101px;width:82px;border-right:0">Jan</span></div>
</div>
<div class="a sb" style="left:474px;top:442px;width:16px;height:84px">
<div class="a au" style="left:4px;top:7px;opacity:.5"></div><div class="a ad" style="left:4px;bottom:7px;opacity:.5"></div>
</div>
<div class="a sb" style="left:290px;top:526px;width:184px;height:16px">
<div class="a al" style="left:6px;top:4px"></div><div class="a ar" style="right:7px;top:4px"></div>
<div class="a thh" style="left:18px;top:1px;width:130px;height:14px">
<div class="gv2"><i style="top:4px;left:62px;width:1px;height:5px"></i><i style="top:4px;left:64px;width:1px;height:5px"></i><i style="top:4px;left:66px;width:1px;height:5px"></i></div>
</div>
</div>
<div class="a sb" style="left:474px;top:526px;width:16px;height:16px"></div>
<div class="a btn" style="left:494px;top:422px"><svg viewBox="0 0 16 16"><defs><radialGradient id="gadd" cx=".4" cy=".3" r=".8"><stop offset="0" stop-color="#8fd27a"/><stop offset="1" stop-color="#3f9f36"/></radialGradient></defs><circle cx="8" cy="8" r="6.900" fill="#62b455"/><circle cx="8" cy="8" r="6.100" fill="#a9dc9c"/><circle cx="8" cy="8" r="5.300" fill="url(#gadd)"/><path d="M8 4.600v6.800M4.600 8h6.800" stroke="#fff" stroke-width="2.300"/></svg></div>
<div class="a btn" style="left:494px;top:449px"><svg viewBox="0 0 16 16"><defs><linearGradient id="gtb" x1="0" x2="1"><stop offset="0" stop-color="#c3c9ce"/><stop offset=".5" stop-color="#f4f5f6"/><stop offset="1" stop-color="#cfd4d8"/></linearGradient><linearGradient id="gtl" y1="0" y2="1" x2="0"><stop offset="0" stop-color="#b5d0f0"/><stop offset="1" stop-color="#5b8ccc"/></linearGradient></defs><path d="M2.500 4.800h11l-.500 10h-10z" fill="url(#gtb)" stroke="#5c6872" stroke-width=".900"/><path d="M6 7.500v5.500M10 7.500v5.500" stroke="#6d767e" stroke-width="1.400"/><rect x="6.500" y=".500" width="3" height="1.500" fill="#5b8ccc"/><path d="M1 4.800v-1.600q0-1.600 1.600-1.600h10.800q1.600 0 1.600 1.600v1.600z" fill="url(#gtl)" stroke="#4675b5" stroke-width=".700"/></svg></div>
<div class="a btn" style="left:494px;top:476px"><svg viewBox="0 0 16 16"><defs><linearGradient id="gar" x1="0" x2="1"><stop offset="0" stop-color="#c4ecab"/><stop offset="1" stop-color="#58b53d"/></linearGradient></defs><path d="M8 1l4.200 4.800h-2.500v8.700h-3.400v-8.700h-2.500z" fill="url(#gar)" stroke="#2f7d1f" stroke-width=".900" stroke-linejoin="round"/></svg></div>
<div class="a btn" style="left:494px;top:503px"><svg viewBox="0 0 16 16"><defs><linearGradient id="gar" x1="0" x2="1"><stop offset="0" stop-color="#c4ecab"/><stop offset="1" stop-color="#58b53d"/></linearGradient></defs><path d="M8 15l4.200-4.800h-2.500v-8.700h-3.400v8.700h-2.500z" fill="url(#gar)" stroke="#2f7d1f" stroke-width=".900" stroke-linejoin="round"/></svg></div>
<div class="a fs" style="left:530px;top:410px;width:527px;height:136px"></div>
<div class="a lg" style="left:532px;top:404px">Group&#x27;s Learning Areas</div>
<div class="a grid" style="left:531px;top:420px;width:496px;height:124px">
<div class="a gh"><span class="f" style="left:0;width:16px"></span><span style="left:16px;width:21px">S1</span><span style="left:37px;width:21px">S2</span><span style="left:58px;width:301px">Learning Area</span><span style="left:359px;right:0">Context</span></div>
<div class="row" style="top:20px;width:475px">
<span style="left:0;width:17px;padding:0;border-bottom:0"><b class="a kk" style="left:0;top:0">K</b></span>
<span style="left:17px;width:21px;padding:0"><i class="a cb" style="left:1px;top:1px"></i><svg class="a" style="left:2px;top:2px" width="9" height="9" viewBox="0 0 9 9"><path d="M1.500 4l2 2.500l4-5" fill="none" stroke="#8d8d8d" stroke-width="1.600"/></svg></span>
<span style="left:38px;width:21px;padding:0"><i class="a cb" style="left:1px;top:1px"></i><svg class="a" style="left:2px;top:2px" width="9" height="9" viewBox="0 0 9 9"><path d="M1.500 4l2 2.500l4-5" fill="none" stroke="#8d8d8d" stroke-width="1.600"/></svg></span>
<span style="left:59px;width:301px"><b>Identity</b></span>
<span style="left:360px;width:115px;border-right:0">Global</span>
</div>
<div class="row" style="top:37px;width:475px">
<span style="left:0;width:17px;padding:0;border-bottom:0"><b class="a kk" style="left:0;top:0">K</b></span>
<span style="left:17px;width:21px;padding:0"><i class="a cb" style="left:1px;top:1px"></i><svg class="a" style="left:2px;top:2px" width="9" height="9" viewBox="0 0 9 9"><path d="M1.500 4l2 2.500l4-5" fill="none" stroke="#8d8d8d" stroke-width="1.600"/></svg></span>
<span style="left:38px;width:21px;padding:0"><i class="a cb" style="left:1px;top:1px"></i><svg class="a" style="left:2px;top:2px" width="9" height="9" viewBox="0 0 9 9"><path d="M1.500 4l2 2.500l4-5" fill="none" stroke="#8d8d8d" stroke-width="1.600"/></svg></span>
<span style="left:59px;width:301px">Identity, Feels safe, secure, accepted and supported</span>
<span style="left:360px;width:115px;border-right:0">Global</span>
</div>
<div class="row" style="top:54px;width:475px">
<span style="left:0;width:17px;padding:0;border-bottom:0"><b class="a kk" style="left:0;top:0">K</b></span>
<span style="left:17px;width:21px;padding:0"><i class="a cb" style="left:1px;top:1px"></i><svg class="a" style="left:2px;top:2px" width="9" height="9" viewBox="0 0 9 9"><path d="M1.500 4l2 2.500l4-5" fill="none" stroke="#8d8d8d" stroke-width="1.600"/></svg></span>
<span style="left:38px;width:21px;padding:0"><i class="a cb" style="left:1px;top:1px"></i><svg class="a" style="left:2px;top:2px" width="9" height="9" viewBox="0 0 9 9"><path d="M1.500 4l2 2.500l4-5" fill="none" stroke="#8d8d8d" stroke-width="1.600"/></svg></span>
<span style="left:59px;width:301px">Identity, Shows resilience, makes choices and organises self</span>
<span style="left:360px;width:115px;border-right:0">Global</span>
</div>
<div class="row" style="top:71px;width:475px">
<span style="left:0;width:17px;padding:0;border-bottom:0"><b class="a kk" style="left:0;top:0">K</b></span>
<span style="left:17px;width:21px;padding:0"><i class="a cb" style="left:1px;top:1px"></i><svg class="a" style="left:2px;top:2px" width="9" height="9" viewBox="0 0 9 9"><path d="M1.500 4l2 2.500l4-5" fill="none" stroke="#8d8d8d" stroke-width="1.600"/></svg></span>
<span style="left:38px;width:21px;padding:0"><i class="a cb" style="left:1px;top:1px"></i><svg class="a" style="left:2px;top:2px" width="9" height="9" viewBox="0 0 9 9"><path d="M1.500 4l2 2.500l4-5" fill="none" stroke="#8d8d8d" stroke-width="1.600"/></svg></span>
<span style="left:59px;width:301px">Identity, Shows confidence in their own ability and displays</span>
<span style="left:360px;width:115px;border-right:0">Global</span>
</div>
<div class="row" style="top:88px;width:475px">
<span style="left:0;width:17px;padding:0;border-bottom:0"><b class="a kk" style="left:0;top:0">K</b></span>
<span style="left:17px;width:21px;padding:0"><i class="a cb" style="left:1px;top:1px"></i><svg class="a" style="left:2px;top:2px" width="9" height="9" viewBox="0 0 9 9"><path d="M1.500 4l2 2.500l4-5" fill="none" stroke="#8d8d8d" stroke-width="1.600"/></svg></span>
<span style="left:38px;width:21px;padding:0"><i class="a cb" style="left:1px;top:1px"></i><svg class="a" style="left:2px;top:2px" width="9" height="9" viewBox="0 0 9 9"><path d="M1.500 4l2 2.500l4-5" fill="none" stroke="#8d8d8d" stroke-width="1.600"/></svg></span>
<span style="left:59px;width:301px">Identity, Interacts with others with care, empathy and respect</span>
<span style="left:360px;width:115px;border-right:0">Global</span>
</div>
</div>
<div class="a sb" style="left:1009px;top:442px;width:16px;height:84px">
<div class="a au" style="left:4px;top:7px"></div><div class="a ad" style="left:4px;bottom:7px"></div>
<div class="a thv" style="left:1px;top:18px;width:14px;height:15px">
</div>
</div>
<div class="a sb" style="left:533px;top:526px;width:476px;height:16px">
<div class="a al" style="left:6px;top:4px"></div><div class="a ar" style="right:7px;top:4px"></div>
<div class="a thh" style="left:19px;top:1px;width:293px;height:14px">
<div class="gv2"><i style="top:4px;left:143px;width:1px;height:5px"></i><i style="top:4px;left:145px;width:1px;height:5px"></i><i style="top:4px;left:147px;width:1px;height:5px"></i></div>
</div>
</div>
<div class="a sb" style="left:1009px;top:526px;width:16px;height:16px"></div>
<div class="a btn" style="left:1029px;top:422px"><svg viewBox="0 0 16 16"><defs><radialGradient id="gadd" cx=".4" cy=".3" r=".8"><stop offset="0" stop-color="#8fd27a"/><stop offset="1" stop-color="#3f9f36"/></radialGradient></defs><circle cx="8" cy="8" r="6.900" fill="#62b455"/><circle cx="8" cy="8" r="6.100" fill="#a9dc9c"/><circle cx="8" cy="8" r="5.300" fill="url(#gadd)"/><path d="M8 4.600v6.800M4.600 8h6.800" stroke="#fff" stroke-width="2.300"/></svg></div>
<div class="a btn" style="left:1029px;top:449px"><svg viewBox="0 0 16 16"><defs><linearGradient id="gtb" x1="0" x2="1"><stop offset="0" stop-color="#c3c9ce"/><stop offset=".5" stop-color="#f4f5f6"/><stop offset="1" stop-color="#cfd4d8"/></linearGradient><linearGradient id="gtl" y1="0" y2="1" x2="0"><stop offset="0" stop-color="#b5d0f0"/><stop offset="1" stop-color="#5b8ccc"/></linearGradient></defs><path d="M2.500 4.800h11l-.500 10h-10z" fill="url(#gtb)" stroke="#5c6872" stroke-width=".900"/><path d="M6 7.500v5.500M10 7.500v5.500" stroke="#6d767e" stroke-width="1.400"/><rect x="6.500" y=".500" width="3" height="1.500" fill="#5b8ccc"/><path d="M1 4.800v-1.600q0-1.600 1.600-1.600h10.800q1.600 0 1.600 1.600v1.600z" fill="url(#gtl)" stroke="#4675b5" stroke-width=".700"/></svg></div>
<div class="a btn" style="left:1029px;top:496px"><svg viewBox="0 0 16 16"><path d="M0 2h16M0 8h16M0 14h16" stroke="#333" stroke-width="1"/><path d="M11 .500l1.500 1.500l-1.500 1.500M11 6.500l1.500 1.500l-1.500 1.500M11 12.500l1.500 1.500l-1.500 1.500" fill="none" stroke="#333" stroke-width=".900"/><circle cx="0.5" cy="2" r="1.900" fill="#fff" stroke="#43a233" stroke-width="1.300"/><circle cx="15.5" cy="2" r="1.900" fill="#fff" stroke="#43a233" stroke-width="1.300"/><circle cx="0.5" cy="8" r="1.900" fill="#fff" stroke="#43a233" stroke-width="1.300"/><circle cx="15.5" cy="8" r="1.900" fill="#fff" stroke="#43a233" stroke-width="1.300"/><circle cx="0.5" cy="14" r="1.900" fill="#fff" stroke="#43a233" stroke-width="1.300"/><circle cx="15.5" cy="14" r="1.900" fill="#fff" stroke="#43a233" stroke-width="1.300"/></svg></div>
<div class="a" style="left:0;top:555px;width:1076px;height:2px;background:#3b4768"></div>
<a class="a ft" id="f1" style="left:10px;top:564px;letter-spacing:0.119px">Disclaimer &amp; Copyright</a>
<div class="a ft" style="left:129.5px;top:564px;letter-spacing:0.000px">|</div>
<a class="a ft" id="f1b" style="left:137px;top:564px;letter-spacing:0.277px">Privacy</a>
<div class="a ft" style="left:180px;top:564px;letter-spacing:0.000px">|</div>
<a class="a ft" id="f1c" style="left:187px;top:564px;letter-spacing:0.017px">Lodging a complaint</a>
<div class="a ft" id="f2" style="left:628px;top:564px;letter-spacing:0.097px">©2008, 2016 Department of Education</div>
<div class="a ft" style="left:825px;top:564px;letter-spacing:0.000px">|</div>
<a class="a ft" id="f2b" style="left:832px;top:564px;letter-spacing:0.294px">customer.service.centre@education.wa.edu.au</a>
</body>
</html>
